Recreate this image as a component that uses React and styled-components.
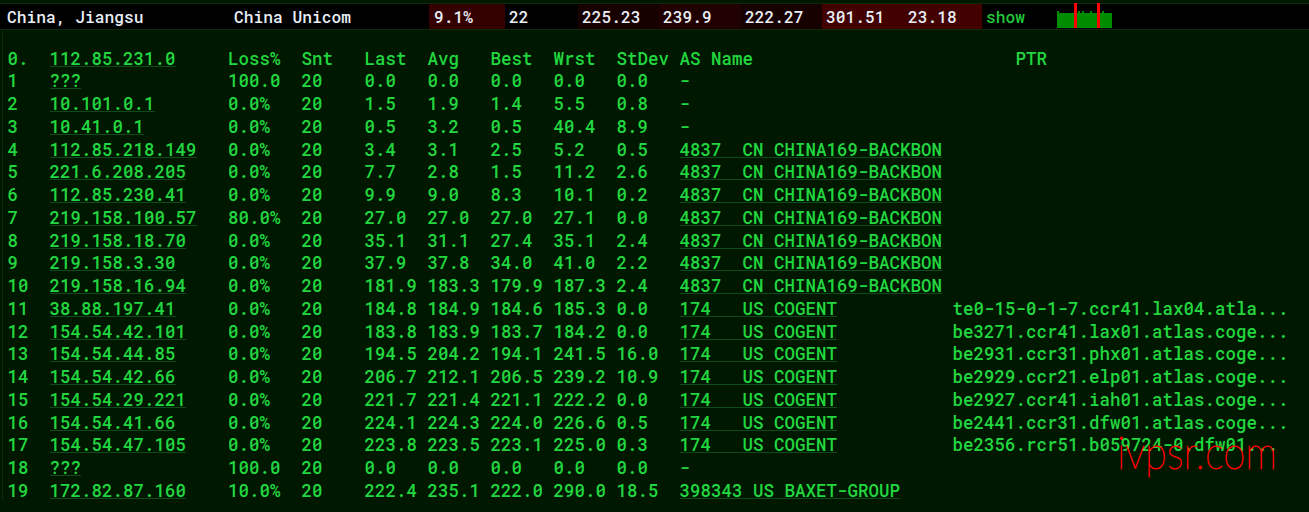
import styled, { createGlobalStyle } from "styled-components";

const GlobalStyle = createGlobalStyle`
  html, body {
    margin: 0;
    padding: 0;
    background: #001700;
  }
`;

const Page = styled.div`
  position: relative;
  width: 1309px;
  height: 512px;
  overflow: hidden;
  padding-top: 3px;
  box-sizing: border-box;
  background: #001700;
  font-family: "Roboto Mono", "DejaVu Sans Mono", "Liberation Mono", monospace;
`;

const TopBar = styled.div`
  display: flex;
  height: 25px;
  padding-left: 7px;
  background: #000;
  border-top: 1px solid #0c2a0c;
  border-bottom: 1px solid #0c2a0c;
  color: #e8eef5;
  font-size: 16.25px;
  font-weight: 500;
  line-height: 25px;
  white-space: pre;
`;

const TopCell = styled.div`
  box-sizing: border-box;
  width: ${(p) => p.$w}px;
  padding-left: ${(p) => p.$pad || 0}px;
  background: ${(p) => p.$bg || "transparent"};
  color: ${(p) => p.$color || "inherit"};
`;

const Spark = styled.svg`
  display: block;
  margin-top: -1px;
`;

const Panel = styled.div`
  margin-left: 2px;
  padding: 17.7px 0 0 4.5px;
  border-left: 1px solid #0c2a0c;
  height: 470px;
  box-sizing: border-box;
  color: #22d63f;
  font-size: 17.5px;
  font-weight: 500;
  line-height: 22.75px;
  white-space: pre;
`;

const Row = styled.div`
  display: flex;
  height: 22.75px;
`;

const Cell = styled.div`
  flex: none;
  width: ${(p) => p.$ch * 10.5}px;
`;

const Link = styled.span`
  display: inline-block;
  height: 18px;
  border-bottom: 1px solid #0e4a1a;
`;

const Watermark = styled.div`
  position: absolute;
  left: 1117px;
  top: 424px;
  color: #f00;
  font-family: "Lato", "Inter", sans-serif;
  font-weight: 100;
  font-size: 46px;
  line-height: 56px;
  -webkit-text-stroke: 0.8px #f00;
  transform: scaleX(0.87);
  transform-origin: left top;
`;

const ptrs = {
  11: "te0-15-0-1-7.ccr41.lax04.atla...",
  12: "be3271.ccr41.lax01.atlas.coge...",
  13: "be2931.ccr31.phx01.atlas.coge...",
  14: "be2929.ccr21.elp01.atlas.coge...",
  15: "be2927.ccr41.iah01.atlas.coge...",
  16: "be2441.ccr31.dfw01.atlas.coge...",
  17: "be2356.rcr51.b059724-0.dfw01...",
};

const CHINA = "4837  CN CHINA169-BACKBON";
const COGENT = "174   US COGENT";

const hops = [
  ["???", "100.0", "0.0", "0.0", "0.0", "0.0", "0.0", "-"],
  ["10.101.0.1", "0.0%", "1.5", "1.9", "1.4", "5.5", "0.8", "-"],
  ["10.41.0.1", "0.0%", "0.5", "3.2", "0.5", "40.4", "8.9", "-"],
  ["112.85.218.149", "0.0%", "3.4", "3.1", "2.5", "5.2", "0.5", CHINA],
  ["221.6.208.205", "0.0%", "7.7", "2.8", "1.5", "11.2", "2.6", CHINA],
  ["112.85.230.41", "0.0%", "9.9", "9.0", "8.3", "10.1", "0.2", CHINA],
  ["219.158.100.57", "80.0%", "27.0", "27.0", "27.0", "27.1", "0.0", CHINA],
  ["219.158.18.70", "0.0%", "35.1", "31.1", "27.4", "35.1", "2.4", CHINA],
  ["219.158.3.30", "0.0%", "37.9", "37.8", "34.0", "41.0", "2.2", CHINA],
  ["219.158.16.94", "0.0%", "181.9", "183.3", "179.9", "187.3", "2.4", CHINA],
  ["38.88.197.41", "0.0%", "184.8", "184.9", "184.6", "185.3", "0.0", COGENT],
  ["154.54.42.101", "0.0%", "183.8", "183.9", "183.7", "184.2", "0.0", COGENT],
  ["154.54.44.85", "0.0%", "194.5", "204.2", "194.1", "241.5", "16.0", COGENT],
  ["154.54.42.66", "0.0%", "206.7", "212.1", "206.5", "239.2", "10.9", COGENT],
  ["154.54.29.221", "0.0%", "221.7", "221.4", "221.1", "222.2", "0.0", COGENT],
  ["154.54.41.66", "0.0%", "224.1", "224.3", "224.0", "226.6", "0.5", COGENT],
  ["154.54.47.105", "0.0%", "223.8", "223.5", "223.1", "225.0", "0.3", COGENT],
  ["???", "100.0", "0.0", "0.0", "0.0", "0.0", "0.0", "-"],
  ["172.82.87.160", "10.0%", "222.4", "235.1", "222.0", "290.0", "18.5", "398343 US BAXET-GROUP"],
];

const App = () => (
  <Page>
    <GlobalStyle />
    <TopBar>
      <TopCell $w={227}>China, Jiangsu</TopCell>
      <TopCell $w={195}>China Unicom</TopCell>
      <TopCell $w={76} $pad={5} $bg="#350000">9.1%</TopCell>
      <TopCell $w={73} $pad={4}>22</TopCell>
      <TopCell $w={81} $pad={4} $bg="#170000">225.23</TopCell>
      <TopCell $w={82} $pad={4} $bg="#200000">239.9</TopCell>
      <TopCell $w={81} $pad={4} $bg="#170000">222.27</TopCell>
      <TopCell $w={82} $pad={4} $bg="#420000">301.51</TopCell>
      <TopCell $w={78} $pad={4} $bg="#420000">23.18</TopCell>
      <TopCell $w={75} $pad={4} $color="#22c83a">show</TopCell>
      <Spark width="55" height="26" viewBox="0 0 55 26">
        <path
          d="M0 25V8H2V10H21V8H23V10H25V8H27V10H33V8H35V10H45V8H47V10H55V25Z"
          fill="#008c00"
        />
        <rect x="17" y="0" width="3" height="25" fill="#f00" />
        <rect x="40" y="0" width="3" height="25" fill="#f00" />
      </Spark>
    </TopBar>
    <Panel>
      <Row>
        <Cell $ch={4}>0.</Cell>
        <Cell $ch={17}><Link>112.85.231.0</Link></Cell>
        <Cell $ch={7}>Loss%</Cell>
        <Cell $ch={6}>Snt</Cell>
        <Cell $ch={6}>Last</Cell>
        <Cell $ch={6}>Avg</Cell>
        <Cell $ch={6}>Best</Cell>
        <Cell $ch={6}>Wrst</Cell>
        <Cell $ch={6}>StDev</Cell>
        <Cell $ch={32}>AS Name</Cell>
        <Cell $ch={3}>PTR</Cell>
      </Row>
      {hops.map(([ip, loss, last, avg, best, wrst, stdev, as], i) => (
        <Row key={i}>
          <Cell $ch={4}>{i + 1}</Cell>
          <Cell $ch={17}><Link>{ip}</Link></Cell>
          <Cell $ch={7}>{loss}</Cell>
          <Cell $ch={6}>20</Cell>
          <Cell $ch={6}>{last}</Cell>
          <Cell $ch={6}>{avg}</Cell>
          <Cell $ch={6}>{best}</Cell>
          <Cell $ch={6}>{wrst}</Cell>
          <Cell $ch={6}>{stdev}</Cell>
          <Cell $ch={26}>{as === "-" ? as : <Link>{as}</Link>}</Cell>
          <Cell $ch={32}>{ptrs[i + 1]}</Cell>
        </Row>
      ))}
    </Panel>
    <Watermark>ivpsr.com</Watermark>
  </Page>
);

export default App;
